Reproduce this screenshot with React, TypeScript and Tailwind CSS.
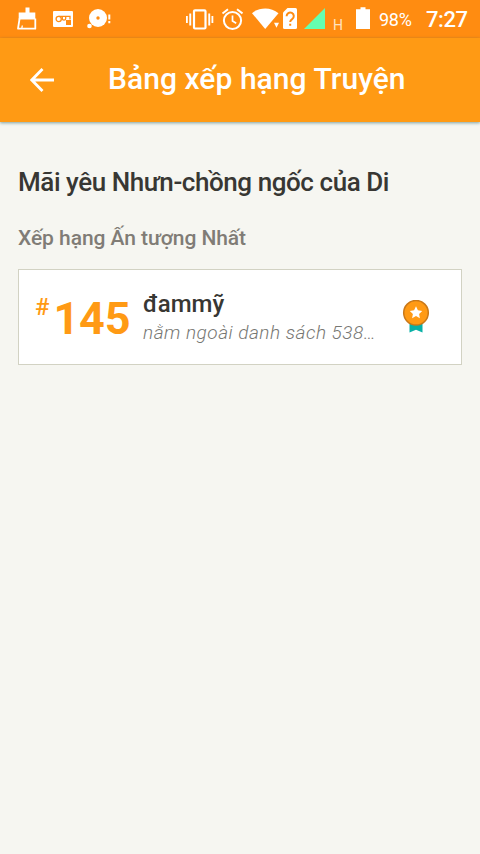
import type { ReactNode } from "react";

type Ranking = {
  position: number;
  tag: string;
  note: string;
};

const rankings: Ranking[] = [
  { position: 145, tag: "đammỹ", note: "nằm ngoài danh sách 538…" },
];

function StatusIcon({ width, className, children }: { width: number; className?: string; children: ReactNode }) {
  return (
    <svg width={width} height="38" viewBox={`0 0 ${width} 38`} fill="white" className={`shrink-0 ${className ?? ""}`}>
      {children}
    </svg>
  );
}

function StatusBar() {
  return (
    <div className="flex h-[38px] items-center bg-[#ff8c11] text-white">
      {/* Cleaner */}
      <StatusIcon width={22} className="ml-4">
        <path d="M9.5 7.5h4v5h5.8v7h-16.6v-7h6.8z" />
        <path d="M3.600 18.5 2 28.700h17.300V18.5" fill="none" stroke="white" strokeWidth="1.8" strokeLinejoin="round" />
        <path d="M6.3 25.5l-.5 3" stroke="white" strokeWidth="1.3" />
      </StatusIcon>

      {/* Voicemail card */}
      <StatusIcon width={20} className="ml-[15px]">
        <rect y="11" width="20" height="16" rx="1" />
        <g fill="none" stroke="#ff8c11" strokeWidth="1.3">
          <circle cx="5.7" cy="19" r="2.600" />
          <path d="M5.7 16.400h11.300v3" />
          <path d="M9.300 16.400v2a1.700 1.700 0 0 0 3.400 0v-2" />
        </g>
        <rect x="13" y="20" width="5" height="5" fill="#ff8c11" />
      </StatusIcon>

      {/* Disc */}
      <StatusIcon width={26} className="ml-[14px]">
        <circle cx="11" cy="18" r="9" />
        <circle cx="11" cy="18" r="1.7" fill="#ff8c11" />
        <circle cx="2.5" cy="26" r="2.3" />
        <path d="M21.3 14.5h2v5h-2zM21.3 21h2v2.2h-2z" />
      </StatusIcon>

      {/* Vibrate */}
      <StatusIcon width={28} className="ml-[73px]">
        <rect x="8" y="10.3" width="11.5" height="18.2" rx="1" fill="none" stroke="white" strokeWidth="2.2" />
        <path d="M0 16h1.8v7H0zM3.3 13.5h1.9v12H3.3zM22.3 13.5h1.9v12h-1.9zM25.5 16h1.8v7h-1.8z" />
      </StatusIcon>

      {/* Alarm */}
      <StatusIcon width={22} className="ml-[7px]">
        <g fill="none" stroke="white" strokeWidth="2">
          <circle cx="11.5" cy="20.5" r="8.6" />
          <path d="M1.5 13.5 7 9.3M16 9.3l5.5 4.2" />
          <path d="M11.5 15.5v5.5l3.7 2.3" strokeWidth="1.7" />
        </g>
      </StatusIcon>

      {/* Wifi */}
      <StatusIcon width={28} className="ml-[9px]">
        <path d="M0 13.2C7.5 6.8 19 6.8 26.5 13.2L13.2 29z" />
        <path d="M20.8 20.5h7.2l-3.600 9z" fill="#ff8c11" />
        <path d="M22 22.8h5l-2.5 5z" />
      </StatusIcon>

      {/* Unknown sim */}
      <StatusIcon width={15} className="ml-[2px]">
        <path d="M5.5 8h8a1.5 1.5 0 0 1 1.5 1.5v18a1.5 1.5 0 0 1-1.5 1.5h-11A1.5 1.5 0 0 1 1 27.5V12.5z" />
        <path d="M4.6 16.200a3.600 3.600 0 1 1 5.600 2.900c-1.500 1-2 1.400-2 3M8.200 23.800v2" fill="none" stroke="#ff8c11" strokeWidth="2" />
      </StatusIcon>

      {/* Signal */}
      <StatusIcon width={22} className="ml-[7px]">
        <path d="M0 29 21 8v21z" fill="#64ffb0" />
      </StatusIcon>
      <span className="mt-3 ml-[7px] w-[11px] text-[14px] leading-none text-[#ffe3c0]">H</span>

      {/* Battery */}
      <StatusIcon width={14} className="ml-[12px]">
        <path d="M4.5 7.3h5v2H14V29H0V9.3h4.5z" />
      </StatusIcon>

      <span className="mt-0.5 ml-[9px] w-[33px] text-[18px] leading-none tracking-[-0.3px] whitespace-nowrap">98%</span>
      <span className="mt-0.5 ml-[14px] text-[22px] leading-none font-medium tracking-[-0.4px]">7:27</span>
    </div>
  );
}

function Header() {
  return (
    <header className="relative flex h-[84px] items-center bg-[#ff9a14] text-white shadow-[0_1px_3px_rgba(30,90,90,0.55)]">
      <svg width="24" height="24" viewBox="0 0 24 24" fill="none" stroke="white" strokeWidth="2.8" className="ml-[30px]">
        <path d="M24 12H2M12.5 1 1.8 12l10.7 11" />
      </svg>
      <h1 className="mb-0.5 ml-[54px] text-[30px] leading-none font-medium tracking-[0.05px] whitespace-nowrap">
        Bảng xếp hạng Truyện
      </h1>
    </header>
  );
}

function Medal() {
  return (
    <svg width="28" height="34" viewBox="0 0 28 34" className="shrink-0">
      <path d="M7.5 22h13v10.5L14 29.8l-6.5 2.7z" fill="#08b0a6" />
      <circle cx="14" cy="12.8" r="12.3" fill="#ff9a14" stroke="#c97818" strokeWidth="1.5" />
      <path
        d="m14 6.3 1.9 4 4.3.6-3.1 3 .8 4.3-3.9-2.1-3.9 2.1.8-4.3-3.1-3 4.3-.6z"
        fill="white"
      />
    </svg>
  );
}

function RankingCard({ position, tag, note }: Ranking) {
  return (
    <div className="flex h-24 items-center border border-[#d2d2c3] bg-white pl-4">
      <div className="flex w-[108px] items-start text-[#ff9a14]">
        <span className="mt-1 text-[24px] leading-none font-medium">#</span>
        <span className="mt-[3px] ml-1 text-[45px] leading-[50px] font-bold tracking-[-0.2px]">{position}</span>
      </div>
      <div className="w-[240px]">
        <div className="text-[24px] leading-[30px] font-medium text-[#383733]">{tag}</div>
        <div className="truncate text-[19px] leading-[27px] font-light tracking-[0.5px] text-[#777773] italic">{note}</div>
      </div>
      <div className="ml-[19px]">
        <Medal />
      </div>
    </div>
  );
}

export default function App() {
  return (
    <div className="h-[854px] w-[480px] overflow-hidden bg-[#f6f6f1] font-[Roboto,sans-serif]">
      <StatusBar />
      <Header />
      <main className="px-[18px] pt-11">
        <h2 className="text-[26px] leading-8 font-medium tracking-[-0.43px] whitespace-nowrap text-[#383733]">
          Mãi yêu Nhưn-chồng ngốc của Di
        </h2>
        <h3 className="mt-[26px] mb-[17px] text-[21px] leading-7 font-medium tracking-[-0.06px] text-[#807c76]">
          Xếp hạng Ấn tượng Nhất
        </h3>
        {rankings.map((ranking) => (
          <RankingCard key={ranking.tag} {...ranking} />
        ))}
      </main>
    </div>
  );
}
